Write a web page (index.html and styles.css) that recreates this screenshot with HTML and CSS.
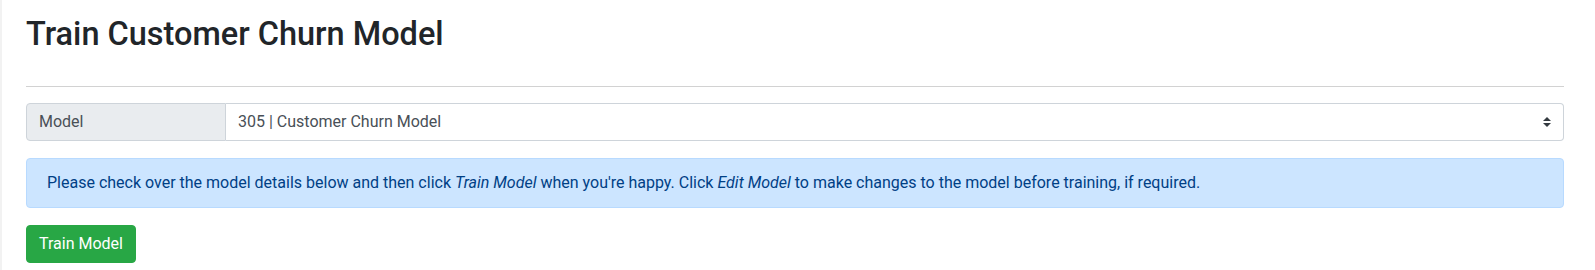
FILE: index.html
```html
<!DOCTYPE html>
<html>
<head>
<meta charset="utf-8">
<link rel="stylesheet" href="styles.css">
</head>
<body>
<div class="page">
  <h2 class="title">Train Customer Churn Model</h2>
  <hr class="rule">
  <div class="input-group">
    <div class="prepend">Model</div>
    <div class="select">
      <span>305 | Customer Churn Model</span>
      <svg class="arrows" width="8" height="10" viewBox="0 0 4 5"><path fill="#343a40" d="M2 0L0 2h4zm0 5L0 3h4z"/></svg>
    </div>
  </div>
  <div class="alert">Please check over the model details below and then click <em>Train Model</em> when you're happy. Click <em>Edit Model</em> to make changes to the model before training, if required.</div>
  <button class="btn">Train Model</button>
</div>
</body>
</html>
```
FILE: styles.css
```css
html, body {
  margin: 0;
  padding: 0;
  background: #fff;
}
body {
  font-family: Roboto, "Liberation Sans", sans-serif;
  color: #212529;
  font-size: 16px;
  line-height: 1.5;
  border-left: 2px solid #f2f2f2;
  height: 270px;
  box-sizing: border-box;
}
.page {
  padding: 15px 31px 0 24px;
}
.title {
  margin: 0;
  font-size: 32.5px;
  font-weight: 500;
  line-height: 1.2;
  height: 40px;
}
.rule {
  margin: 31px 0 16px;
  border: 0;
  border-top: 1px solid #d2d2d2;
}
.input-group {
  display: flex;
  height: 38px;
  margin-bottom: 17px;
}
.prepend {
  width: 200px;
  box-sizing: border-box;
  background: #e9ecef;
  border: 1px solid #ced4da;
  border-radius: 4px 0 0 4px;
  padding: 0 12px;
  display: flex;
  align-items: center;
  color: #495057;
}
.select {
  flex: 1;
  border: 1px solid #ced4da;
  border-left: 0;
  border-radius: 0 4px 4px 0;
  padding: 0 12px;
  display: flex;
  align-items: center;
  justify-content: space-between;
  color: #495057;
}
.arrows {
  display: block;
}
.alert {
  background: #cce5ff;
  border: 1px solid #b8daff;
  border-radius: 4px;
  color: #004085;
  padding: 12px 20px;
  margin-bottom: 17px;
}
.btn {
  font-family: inherit;
  font-size: 16px;
  line-height: 1.5;
  background: #28a745;
  color: #fff;
  border: 1px solid #28a745;
  border-radius: 4px;
  padding: 6px 12px;
  cursor: pointer;
}
```
